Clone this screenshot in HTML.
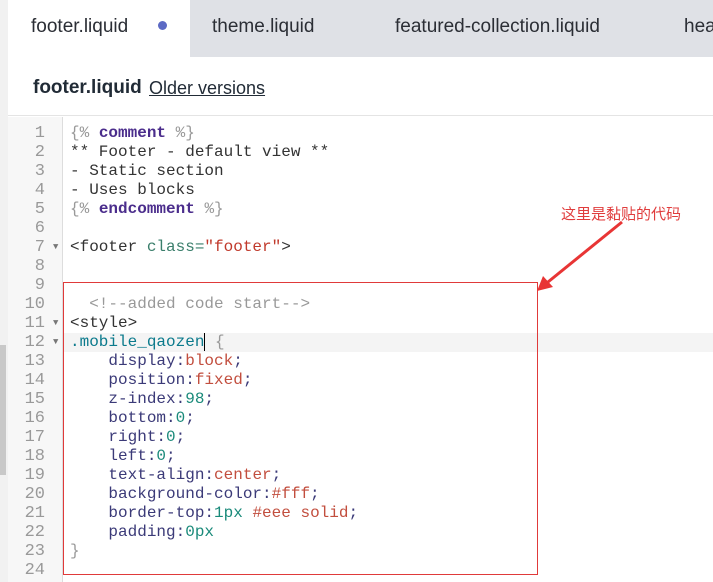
<!DOCTYPE html>
<html style="overflow:hidden;height:582px"><head><meta charset="utf-8"><style>
*{margin:0;padding:0;box-sizing:border-box}
body{width:713px;height:582px;overflow:hidden;background:#fff;position:relative;font-family:"Liberation Sans","Noto Sans CJK SC",sans-serif}
.strip{position:absolute;left:0;top:0;width:8px;height:582px;background:#f1f1f1}
.scroll{position:absolute;left:0;top:345px;width:6px;height:130px;background:#c8c8c8}
.tabs{position:absolute;left:8px;top:0;right:0;height:57px;background:#dfe1e6}
.tab{position:absolute;top:0;height:57px;line-height:53px;font-size:19px;color:#2b2e35}
.hdr{position:absolute;left:8px;right:0;top:57px;height:59px;border-bottom:1px solid #e4e4e4}
.gut{position:absolute;left:8px;top:117px;width:55px;bottom:0;background:#f7f7f7;border-right:1px solid #ddd}
.code{position:absolute;left:0;top:124px;right:0;font-family:"Liberation Mono",monospace;font-size:16px}
.l{height:19px;line-height:19px;position:relative;white-space:pre}
.n{position:absolute;left:8px;width:37px;text-align:right;color:#999;font-size:17px}
.f{position:absolute;left:53px;font-size:9px;color:#777}
.t{position:absolute;left:70px;color:#333}
.k{color:#4b2d8c;font-weight:bold}.g{color:#999}.a{color:#3a7e6b}.s{color:#c0392b}.p{color:#3b3a78}.v{color:#c24e3e}.num{color:#1a8a7a}.c{color:#0b7a8c}
</style></head><body>
<div class="strip"></div><div class="scroll"></div>
<div class="tabs">
<div class="tab" style="left:0;width:182px;background:#fff;padding-left:23px">footer.liquid<span style="position:absolute;left:150px;top:21px;width:9px;height:9px;border-radius:50%;background:#5c6ac4"></span></div>
<div class="tab" style="left:204px">theme.liquid</div>
<div class="tab" style="left:387px">featured-collection.liquid</div>
<div class="tab" style="left:676px">hea</div>
</div>
<div class="hdr"><span style="position:absolute;left:25px;top:20px;font-size:19px;font-weight:bold;color:#212b36">footer.liquid</span><span style="position:absolute;left:141px;top:21px;font-size:18px;color:#212b36;text-decoration:underline">Older versions</span></div>
<div class="gut"></div>
<div style="position:absolute;left:63px;top:333px;right:0;height:19px;background:#f4f4f4"></div>
<div class="code">
<div class="l"><span class="n">1</span><span class="t"><span class="g">{%</span> <span class="k">comment</span> <span class="g">%}</span></span></div>
<div class="l"><span class="n">2</span><span class="t">** Footer - default view **</span></div>
<div class="l"><span class="n">3</span><span class="t">- Static section</span></div>
<div class="l"><span class="n">4</span><span class="t">- Uses blocks</span></div>
<div class="l"><span class="n">5</span><span class="t"><span class="g">{%</span> <span class="k">endcomment</span> <span class="g">%}</span></span></div>
<div class="l"><span class="n">6</span></div>
<div class="l"><span class="n">7</span><span class="f">▼</span><span class="t">&lt;footer <span class="a">class=</span><span class="s">"footer"</span>&gt;</span></div>
<div class="l"><span class="n">8</span></div>
<div class="l"><span class="n">9</span></div>
<div class="l"><span class="n">10</span><span class="t g">  &lt;!--added code start--&gt;</span></div>
<div class="l"><span class="n">11</span><span class="f">▼</span><span class="t">&lt;style&gt;</span></div>
<div class="l"><span class="n">12</span><span class="f">▼</span><span class="t"><span class="c">.mobile_qaozen</span><span style="border-left:1px solid #000"></span> <span class="g">{</span></span></div>
<div class="l"><span class="n">13</span><span class="t p">    display:<span class="v">block</span>;</span></div>
<div class="l"><span class="n">14</span><span class="t p">    position:<span class="v">fixed</span>;</span></div>
<div class="l"><span class="n">15</span><span class="t p">    z-index:<span class="num">98</span>;</span></div>
<div class="l"><span class="n">16</span><span class="t p">    bottom:<span class="num">0</span>;</span></div>
<div class="l"><span class="n">17</span><span class="t p">    right:<span class="num">0</span>;</span></div>
<div class="l"><span class="n">18</span><span class="t p">    left:<span class="num">0</span>;</span></div>
<div class="l"><span class="n">19</span><span class="t p">    text-align:<span class="v">center</span>;</span></div>
<div class="l"><span class="n">20</span><span class="t p">    background-color:<span class="v">#fff</span>;</span></div>
<div class="l"><span class="n">21</span><span class="t p">    border-top:<span class="num">1px</span> <span class="v">#eee solid</span>;</span></div>
<div class="l"><span class="n">22</span><span class="t p">    padding:<span class="num">0px</span></span></div>
<div class="l"><span class="n">23</span><span class="t g">}</span></div>
<div class="l"><span class="n">24</span></div>
</div>
<div style="position:absolute;left:63px;top:282px;width:475px;height:293px;border:1px solid #e03a3a"></div>
<svg style="position:absolute;left:0;top:0" width="713" height="582"><line x1="622" y1="222" x2="548" y2="282" stroke="#e83535" stroke-width="3"/><polygon points="537,291 543,276 553,287" fill="#e83535"/></svg>
<div style="position:absolute;left:561px;top:203px;font-size:15px;color:#e03c3c;font-family:'Noto Sans CJK SC',sans-serif">这里是黏贴的代码</div>
</body></html>
